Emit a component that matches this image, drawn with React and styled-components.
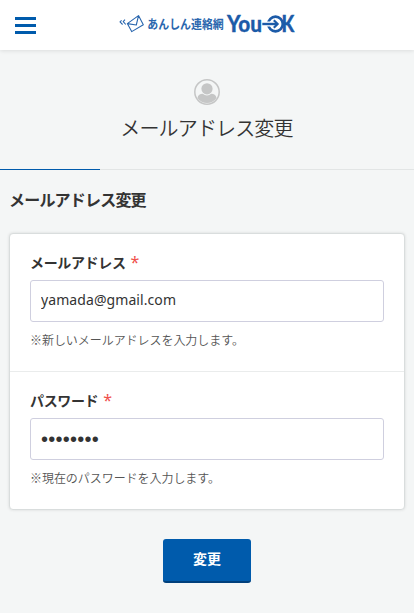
import styled, { createGlobalStyle } from 'styled-components'

const GlobalStyle = createGlobalStyle`
  * {
    box-sizing: border-box;
  }

  body {
    margin: 0;
    background: #f4f6f6;
    color: #333;
    font-family: 'Noto Sans', 'Noto Sans CJK JP', sans-serif;
    overflow: hidden;
  }
`

const Logo = () => (
  <LogoSvg width="178" height="30" viewBox="119 9 178 30" role="img" aria-label="あんしん連絡網 You-OK">
    <g fill="none" stroke="#2966ae" strokeWidth="1.1" strokeLinejoin="round">
      <path d="M122.6 20.3l-1.6 1.6 2.6 2.6M126 19.6l-1.8 2 2.6 2.9" />
      <path d="M128.3 23.6l11.2-8 4.8 9.2-11.6 6.8zM128.3 23.6l9 1.4 2.2-9.4" />
    </g>
    <text
      x="148.3"
      y="28.6"
      fill="#2966ae"
      fontSize="12.4"
      fontWeight="700"
      textLength="76.5"
      lengthAdjust="spacingAndGlyphs"
      fontFamily="Noto Sans CJK JP, sans-serif"
    >
      あんしん連絡網
    </text>
    <g fill="#1c5ba8" stroke="#1c5ba8" strokeWidth="0.3" fontSize="22.5" fontFamily="Lato, sans-serif" fontWeight="900">
      <text x="228" y="32" textLength="35" lengthAdjust="spacingAndGlyphs">
        You
      </text>
      <text x="282.6" y="32" textLength="12.8" lengthAdjust="spacingAndGlyphs">
        K
      </text>
    </g>
    <g fill="none" stroke="#1c5ba8">
      <circle cx="276.5" cy="24" r="7.3" strokeWidth="2.7" />
      <path d="M266 24h12" stroke="#fff" strokeWidth="5" />
      <path d="M263.3 24h15" strokeWidth="2.4" />
      <path d="M274.8 20.2l3.8 3.800-3.800 3.800" strokeWidth="2.2" />
    </g>
  </LogoSvg>
)

const UserIcon = () => (
  <svg width="26" height="26" viewBox="0 0 26 26" aria-hidden="true">
    <circle cx="13" cy="13" r="12.2" fill="none" stroke="#c5c6c6" strokeWidth="1.5" />
    <circle cx="13" cy="9.8" r="5.6" fill="#c5c6c6" />
    <path
      d="M3.5 19c.5-3 2.500-4.300 5.200-4.300a6.700 6.700 0 0 0 8.600 0c2.700 0 4.700 1.300 5.200 4.300a11.500 11.500 0 0 1-19 0z"
      fill="#c5c6c6"
    />
  </svg>
)

const Field = ({ id, label, hint, ...inputProps }) => (
  <FieldRow>
    <Label htmlFor={id}>
      {label}
      <Required>*</Required>
    </Label>
    <Input id={id} {...inputProps} />
    <Hint>{hint}</Hint>
  </FieldRow>
)

export default function App() {
  return (
    <>
      <GlobalStyle />
      <Header>
        <MenuButton aria-label="メニュー">
          <span />
          <span />
          <span />
        </MenuButton>
        <Logo />
      </Header>
      <PageHead>
        <UserIcon />
        <PageTitle>メールアドレス変更</PageTitle>
      </PageHead>
      <Progress />
      <Main>
        <SectionTitle>メールアドレス変更</SectionTitle>
        <Card>
          <Field
            id="email"
            type="text"
            label="メールアドレス"
            defaultValue="yamada@gmail.com"
            hint="※新しいメールアドレスを入力します。"
          />
          <Field
            id="password"
            type="password"
            label="パスワード"
            defaultValue="password"
            hint="※現在のパスワードを入力します。"
          />
        </Card>
        <SubmitButton>変更</SubmitButton>
      </Main>
    </>
  )
}

const Header = styled.header`
  display: flex;
  align-items: center;
  gap: 83px;
  height: 50px;
  padding: 0 15px;
  background: #fff;
  box-shadow: 0 1px 4px rgba(0, 0, 0, 0.1);
`

const LogoSvg = styled.svg`
  flex: none;
  margin: -2px 0 0 -1px;
`

const MenuButton = styled.button`
  display: flex;
  flex-direction: column;
  gap: 4px;
  width: 21px;
  margin-top: 1px;
  padding: 0;
  border: 0;
  background: none;

  span {
    height: 3px;
    background: #005bac;
  }
`

const PageHead = styled.div`
  display: flex;
  flex-direction: column;
  align-items: center;
  height: 119px;
  padding-top: 29px;
`

const PageTitle = styled.h1`
  margin: 8px 0 0 -1px;
  font-size: 20px;
  font-weight: 350;
  font-family: 'Noto Sans CJK JP', sans-serif;
  line-height: 30px;
  letter-spacing: -0.85px;
`

const Progress = styled.div`
  height: 1px;
  background: linear-gradient(to right, #005bac 100px, #e2e5e5 100px);
`

const Main = styled.main`
  display: flex;
  flex-direction: column;
  padding: 18px 9px 0;
`

const SectionTitle = styled.h2`
  margin: 0 0 21px;
  font-size: 16px;
  font-weight: 700;
  line-height: 24px;
  letter-spacing: -0.8px;
`

const Card = styled.section`
  height: 277px;
  border: 1px solid #d9dddd;
  border-radius: 4px;
  background: #fff;
  box-shadow: 0 0 3px rgba(0, 0, 0, 0.12);
`

const FieldRow = styled.div`
  height: 137px;
  padding: 17px 20px 0;

  & + & {
    height: 138px;
    border-top: 1px solid #eaecec;
  }
`

const Label = styled.label`
  display: block;
  height: 29px;
  font-size: 14px;
  font-weight: 700;
  line-height: 22px;
  letter-spacing: -0.35px;
`

const Required = styled.span`
  margin-left: 5px;
  color: #f0504b;
  font-size: 16px;
  font-weight: 400;
`

const Input = styled.input`
  display: block;
  width: 100%;
  height: 42px;
  padding: 0 10px 3px;
  border: 1px solid #cfcfdf;
  border-radius: 3px;
  outline: none;
  background: #fff;
  color: #333;
  font: 400 14px 'Noto Sans', sans-serif;
  letter-spacing: 0.08px;

  &[type='password'] {
    padding-bottom: 0;
    font: 400 20px 'Liberation Sans', sans-serif;
    letter-spacing: 0.25px;
  }
`

const Hint = styled.p`
  margin: 8px 0 0;
  color: #555;
  font-size: 12px;
  font-family: 'Noto Sans CJK JP', sans-serif;
  font-weight: 350;
  line-height: 20px;
  letter-spacing: -0.05px;
`

const SubmitButton = styled.button`
  align-self: center;
  width: 88px;
  height: 44px;
  margin-top: 29px;
  padding: 0 0 4px;
  border: 0;
  border-bottom: 2px solid #00407c;
  border-radius: 3px;
  background: #005bac;
  color: #fff;
  font: 700 14px 'Noto Sans CJK JP', sans-serif;
`
